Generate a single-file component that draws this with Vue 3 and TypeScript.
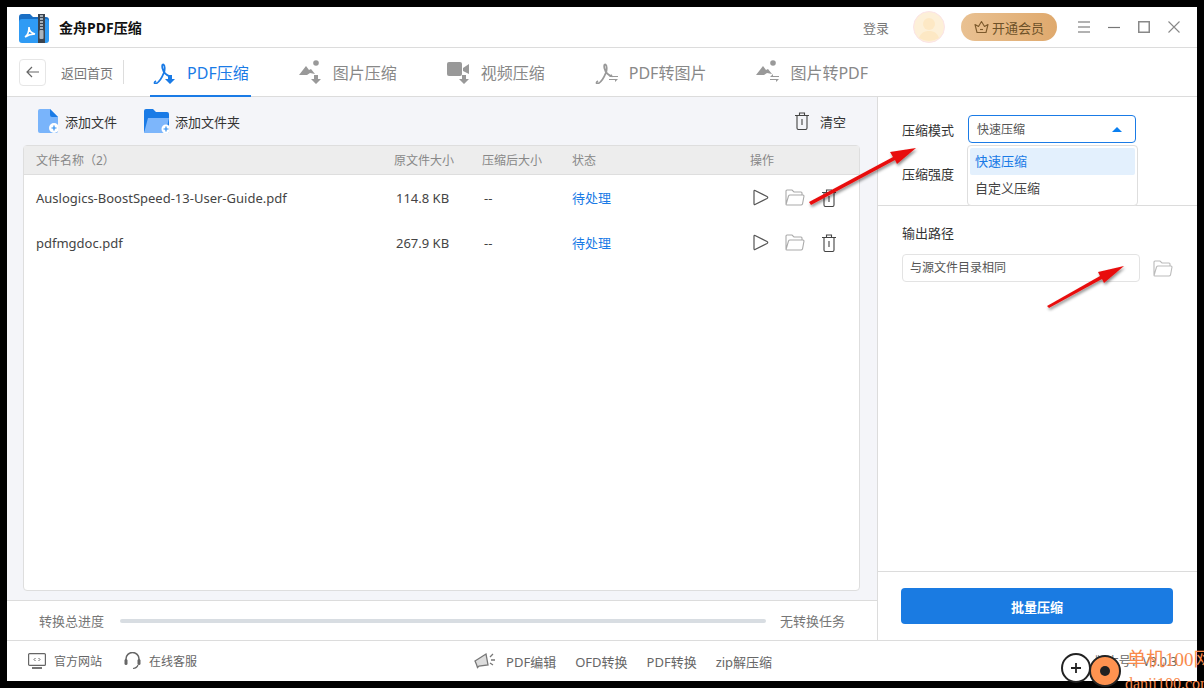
<script setup lang="ts">
interface Tab {
  label: string;
  icon: "pdfDown" | "imgDown" | "videoDown" | "pdfSwap" | "imgSwap";
  active?: boolean;
}

interface FileRow {
  name: string;
  size: string;
  after: string;
  status: string;
}

const tabs: Tab[] = [
  { label: "PDF压缩", icon: "pdfDown", active: true },
  { label: "图片压缩", icon: "imgDown" },
  { label: "视频压缩", icon: "videoDown" },
  { label: "PDF转图片", icon: "pdfSwap" },
  { label: "图片转PDF", icon: "imgSwap" },
];

const files: FileRow[] = [
  { name: "Auslogics-BoostSpeed-13-User-Guide.pdf", size: "114.8 KB", after: "--", status: "待处理" },
  { name: "pdfmgdoc.pdf", size: "267.9 KB", after: "--", status: "待处理" },
];

const promos = ["PDF编辑", "OFD转换", "PDF转换", "zip解压缩"];

const acrobat =
  "M3 21c-2 1-2 3 0 2.500 3-1 6-6 8-11 1-3 1-7-.500-8-1.500-.500-1.500 2-1 4 1 4 4 7 8 8";
</script>

<template>
  <div class="app">
    <header class="title-bar">
      <svg class="logo" width="30" height="30" viewBox="0 0 30 30">
        <path d="M0 4q0-3 3-3h8l3 3h13q3 0 3 3v3H0z" fill="#1a6fc4" />
        <rect x="0" y="6" width="30" height="24" rx="3" fill="#2f9bf4" />
        <rect x="19" y="1" width="7" height="29" fill="#3a4450" />
        <path d="M21 3h3M21 6h3M21 9h3M21 12h3M21 15h3" stroke="#c9d2da" stroke-width="1.500" />
        <rect x="20.500" y="17" width="4" height="9" rx="1" fill="#aab4bd" />
        <path d="M6 24c3-2 4-6 4-10 0 4 2 6 6 7-4 0-7 1-10 3z" fill="none" stroke="#fff" stroke-width="1.600" />
      </svg>
      <span class="app-name">金舟PDF压缩</span>
      <span class="login">登录</span>
      <span class="avatar">
        <svg width="32" height="32" viewBox="0 0 32 32">
          <circle cx="16" cy="16" r="15.500" fill="#fdf0d8" stroke="#fbe3e6" />
          <circle cx="16" cy="13" r="6" fill="#fde8c4" />
          <path d="M6 27c2-6 6-7 10-7s8 1 10 7q-10 6-20 0z" fill="#fde8c4" />
        </svg>
      </span>
      <span class="vip">
        <svg width="15" height="14" viewBox="0 0 15 14" fill="none" stroke="#7d5a2c" stroke-width="1.100">
          <path d="M3 12.500h9l2-8-3.500 2L7.500 1.500 4.500 6.500 1 4.500z" stroke-linejoin="round" />
          <path d="M6 9.500h3" />
        </svg>
        开通会员
      </span>
      <div class="win-btns">
        <svg width="12" height="12" viewBox="0 0 12 12" stroke="#999" stroke-width="1.300">
          <path d="M0 1h12M0 6h12M0 11h12" />
        </svg>
        <svg width="12" height="12" viewBox="0 0 12 12" stroke="#777" stroke-width="1.200">
          <path d="M0 6.500h12" />
        </svg>
        <svg width="12" height="12" viewBox="0 0 12 12" fill="none" stroke="#888" stroke-width="1.500">
          <rect x=".750" y=".750" width="10.500" height="10.500" />
        </svg>
        <svg width="12" height="12" viewBox="0 0 12 12" stroke="#888" stroke-width="1.100">
          <path d="M.500.500l11 11M11.500.500l-11 11" />
        </svg>
      </div>
    </header>

    <nav class="tab-bar">
      <button class="back" type="button">
        <svg width="14" height="12" viewBox="0 0 14 12" fill="none" stroke="#666" stroke-width="1.200">
          <path d="M13 6H1M6 1L1 6l5 5" />
        </svg>
      </button>
      <span class="back-text">返回首页</span>
      <span class="divider"></span>
      <div class="tabs">
        <div v-for="tab in tabs" :key="tab.label" class="tab" :class="{ 'tab--active': tab.active }">
          <svg class="tab-icon" width="24" height="24" viewBox="0 0 24 24">
            <template v-if="tab.icon === 'pdfDown' || tab.icon === 'pdfSwap'">
              <path :d="acrobat" fill="none" stroke="currentColor" stroke-width="1.800" />
            </template>
            <template v-if="tab.icon === 'imgDown' || tab.icon === 'imgSwap'">
              <path d="M0 15l7-9 3 4 2-1 4 5-5-1-3 2z" fill="currentColor" />
              <circle cx="17" cy="3" r="2.800" fill="currentColor" />
            </template>
            <template v-if="tab.icon === 'videoDown'">
              <rect x="0" y="2" width="15" height="14" rx="2" fill="currentColor" />
              <path d="M16 8l6-4v10l-6-3z" fill="currentColor" />
            </template>
            <path
              v-if="tab.icon === 'pdfDown' || tab.icon === 'imgDown' || tab.icon === 'videoDown'"
              d="M15 15h4v4h3l-5 5-5-5h3z"
              fill="currentColor"
            />
            <path
              v-if="tab.icon === 'pdfSwap' || tab.icon === 'imgSwap'"
              d="M14 17l3-3v2h6v1zM14 19h9l-3 3v-2h-6z"
              fill="currentColor"
            />
          </svg>
          <span>{{ tab.label }}</span>
        </div>
      </div>
    </nav>

    <div class="main">
      <section class="left">
        <div class="toolbar">
          <span class="tool tool--file">
            <svg width="20" height="24" viewBox="0 0 20 24">
              <path d="M2 0h10l8 8v14q0 2-2 2H2q-2 0-2-2V2q0-2 2-2z" fill="#79b4fb" />
              <path d="M12 0l8 8h-6q-2 0-2-2z" fill="#1a7be6" />
              <circle cx="16" cy="19" r="5" fill="#fff" />
              <path d="M13.500 19h5M16 16.500v5" stroke="#2f8ef0" stroke-width="1.200" />
            </svg>
            添加文件
          </span>
          <span class="tool tool--folder">
            <svg width="25" height="24" viewBox="0 0 25 24">
              <path d="M0 2q0-2 2-2h7l3 3h11q2 0 2 2v2H0z" fill="#1a7be6" />
              <path d="M0 22V7h25v15q0 2-2 2H2q-2 0-2-2z" fill="#1a7be6" />
              <path d="M4 9h21l-3 13q0 2-2 2H0z" fill="#7db6fb" />
              <circle cx="22" cy="20" r="4.500" fill="#fff" />
              <path d="M19.500 20h5M22 17.500v5" stroke="#2f8ef0" stroke-width="1.200" />
            </svg>
            添加文件夹
          </span>
          <span class="tool tool--clear">
            <svg width="14" height="18" viewBox="0 0 14 18" fill="none" stroke="#444" stroke-width="1.100">
              <path d="M0 3.500h14M4.500 3.500V1h5v2.500M2 3.500v12.500q0 1.500 1.500 1.500h7q1.500 0 1.500-1.500V3.500M7 7v6" />
            </svg>
            清空
          </span>
        </div>

        <div class="table">
          <div class="row row--head">
            <span>文件名称（2）</span>
            <span>原文件大小</span>
            <span>压缩后大小</span>
            <span>状态</span>
            <span>操作</span>
          </div>
          <div v-for="file in files" :key="file.name" class="row row--file">
            <span class="file-name">{{ file.name }}</span>
            <span class="cell-num">{{ file.size }}</span>
            <span class="cell-num">{{ file.after }}</span>
            <span class="status">{{ file.status }}</span>
            <span class="actions">
              <svg width="16" height="17" viewBox="0 0 16 17" fill="none" stroke="#555" stroke-width="1.200">
                <path d="M2 1.500q-1-.500-1 1v12q0 1.500 1 1l12-6q1.500-1 0-2z" stroke-linejoin="round" />
              </svg>
              <svg width="20" height="17" viewBox="0 0 20 17" fill="none" stroke="#aaa" stroke-width="1.100">
                <path d="M1 15V2q0-1 1-1h5l2 2h7q1 0 1 1v2M1 15.500q0 .500 1 .500h14q1 0 1.500-1L19 7q0-1-1-1H5q-1 0-1.500 1z" />
              </svg>
              <svg width="16" height="18" viewBox="0 0 16 18" fill="none" stroke="#444" stroke-width="1.100">
                <path d="M1 3.500h14M5.500 3.500V1h5v2.500M3 3.500v12.500q0 1.500 1.500 1.500h7q1.500 0 1.500-1.500V3.500M8 7v6" />
              </svg>
            </span>
          </div>
        </div>

        <div class="progress">
          <span>转换总进度</span>
          <div class="track"></div>
          <span>无转换任务</span>
        </div>
      </section>

      <aside class="right">
        <div class="settings">
          <div class="field">
            <label>压缩模式</label>
            <div class="select">
              <span>快速压缩</span>
              <i class="caret"></i>
            </div>
          </div>
          <div class="field field--strength">
            <label>压缩强度</label>
          </div>
          <ul class="dropdown">
            <li class="dropdown-item dropdown-item--active">快速压缩</li>
            <li class="dropdown-item">自定义压缩</li>
          </ul>
        </div>

        <div class="output">
          <div class="output-label">输出路径</div>
          <div class="output-row">
            <div class="path-input">与源文件目录相同</div>
            <svg width="20" height="17" viewBox="0 0 20 17" fill="none" stroke="#bbb" stroke-width="1.100">
              <path d="M1 15V2q0-1 1-1h5l2 2h7q1 0 1 1v2M1 15.500q0 .500 1 .500h14q1 0 1.500-1L19 7q0-1-1-1H5q-1 0-1.500 1z" />
            </svg>
          </div>
        </div>

        <div class="submit-box">
          <button class="submit" type="button">批量压缩</button>
        </div>
      </aside>
    </div>

    <footer class="footer">
      <span class="foot-link foot-link--site">
        <svg width="18" height="16" viewBox="0 0 18 16" fill="none" stroke="#666" stroke-width="1.200">
          <rect x=".600" y=".600" width="16.800" height="11.800" rx="1" />
          <path d="M4 15h10" stroke-width="1.800" />
          <path d="M7.500 5L6 6.500 7.500 8M10.500 5L12 6.500 10.500 8" stroke-width="1" />
        </svg>
        官方网站
      </span>
      <span class="foot-link foot-link--service">
        <svg width="17" height="18" viewBox="0 0 17 18" fill="none" stroke="#666" stroke-width="1.500">
          <path d="M2 9V7a6.500 6.500 0 0 1 13 0v2" />
          <rect x=".500" y="7" width="3" height="6" rx="1.500" fill="#666" stroke="none" />
          <rect x="13.500" y="7" width="3" height="6" rx="1.500" fill="#666" stroke="none" />
          <path d="M14 13q-1 3-5 3.500" stroke-width="1.200" />
        </svg>
        在线客服
      </span>
      <svg class="horn" width="22" height="18" viewBox="0 0 22 18" fill="none" stroke="#777" stroke-width="1.300">
        <path d="M1 9l11-7 2 11-9 1-1.500 1.500-1-3z" fill="#ddd" />
        <path d="M16 5l3-3M17 8h4M16 11l3 2" />
      </svg>
      <div class="promos">
        <span v-for="promo in promos" :key="promo">{{ promo }}</span>
      </div>
      <span class="version">版本号：V3.0.3</span>
    </footer>

    <svg class="arrows" width="1190" height="674" viewBox="7 7 1190 674">
      <defs>
        <filter id="arrowShadow" x="-20%" y="-20%" width="140%" height="150%">
          <feDropShadow dx="1" dy="2" stdDeviation="1.500" flood-color="#000" flood-opacity="0.45" />
        </filter>
      </defs>
      <g fill="#e8100f" filter="url(#arrowShadow)">
        <path d="M809 202L893 157 890 152 916 148 897 164 895 160 811 205z" />
        <path d="M1047 306L1100 276 1098 272 1124 266 1104 283 1102 279 1049 308z" />
      </g>
    </svg>

    <div class="watermark">
      <svg width="100" height="48" viewBox="0 0 100 48">
        <path d="M22 2A22 22 0 0 0 24 47 20 20 0 0 1 22 2z" fill="#f26a0a" />
        <circle cx="23" cy="22" r="14" fill="#fff" stroke="#222" stroke-width="2" />
        <path d="M18 22h10M23 17v10" stroke="#222" stroke-width="1.800" />
        <circle cx="52" cy="25" r="15" fill="#ff9350" stroke="#222" stroke-width="2" />
        <circle cx="52" cy="25" r="5" fill="#222" />
      </svg>
      <span class="wm-cn">单机100网</span>
      <span class="wm-en">danji100.com</span>
    </div>
  </div>
</template>

<style scoped>
.app {
  position: relative;
  width: 1190px;
  height: 674px;
  margin: 7px 0 0 7px;
  display: flex;
  flex-direction: column;
  background: #fff;
  font-family: "Noto Sans", "Noto Sans CJK SC", sans-serif;
  font-size: 13px;
  color: #333;
}

.title-bar {
  height: 41px;
  flex: none;
  display: flex;
  align-items: center;
  padding-left: 12px;
  border-bottom: 1px solid #dcdcdc;
  box-sizing: border-box;
}

.logo {
  margin-top: 2px;
}

.app-name {
  margin-left: 10px;
  font-size: 14px;
  font-weight: 700;
  color: #111;
}

.login {
  margin-left: auto;
  color: #777;
}

.avatar {
  display: flex;
  margin-left: 24px;
}

.vip {
  display: flex;
  align-items: center;
  justify-content: center;
  gap: 3px;
  width: 96px;
  height: 28px;
  margin-left: 16px;
  border-radius: 14px;
  background: linear-gradient(90deg, #e9c192, #dfa96d);
  color: #6d5128;
}

.win-btns {
  display: flex;
  gap: 18px;
  margin: 0 17px 0 21px;
}

.tab-bar {
  height: 49px;
  flex: none;
  display: flex;
  align-items: center;
  padding-left: 12px;
  border-bottom: 1px solid #dcdcdc;
  box-sizing: border-box;
}

.back {
  width: 27px;
  height: 27px;
  display: flex;
  align-items: center;
  justify-content: center;
  padding: 0;
  background: #fff;
  border: 1px solid #e6e6e6;
  border-radius: 4px;
}

.back-text {
  margin-left: 15px;
  color: #777;
}

.divider {
  width: 1px;
  height: 24px;
  margin-left: 10px;
  background: #ddd;
}

.tabs {
  display: flex;
  gap: 45px;
  height: 100%;
  margin-left: 26px;
}

.tab {
  display: flex;
  align-items: center;
  gap: 10px;
  padding: 0 2px 0 3px;
  margin-bottom: -1px;
  font-size: 16px;
  color: #888;
  box-sizing: border-box;
  border-bottom: 2px solid transparent;
}

.tab-icon {
  color: #999;
}

.tab--active {
  color: #1a7be6;
  border-bottom-color: #1a7be6;
}

.tab--active .tab-icon {
  color: #1a7be6;
}

.main {
  flex: 1;
  min-height: 0;
  display: flex;
}

.left {
  width: 870px;
  flex: none;
  display: flex;
  flex-direction: column;
  background: #f4f5f9;
  border-right: 1px solid #dcdcdc;
  box-sizing: content-box;
}

.toolbar {
  height: 48px;
  flex: none;
  display: flex;
  align-items: center;
  color: #333;
}

.tool {
  display: flex;
  align-items: center;
}

.tool--file {
  margin-left: 31px;
  gap: 7px;
}

.tool--folder {
  margin-left: 27px;
  gap: 6px;
}

.tool--clear {
  margin-left: auto;
  margin-right: 31px;
  gap: 11px;
}

.table {
  flex: 1;
  min-height: 0;
  margin: 0 17px 9px 16px;
  background: #fff;
  border: 1px solid #dedede;
  border-radius: 4px;
}

.row {
  display: grid;
  grid-template-columns: 358px 88px 90px 178px 1fr;
  align-items: center;
  padding-left: 12px;
}

.row--head {
  height: 28px;
  background: #ededed;
  border-bottom: 1px solid #dedede;
  font-size: 12px;
  color: #888;
}

.row--file {
  height: 45px;
  color: #444;
}

.cell-num {
  padding-left: 2px;
}

.status {
  color: #1a7be6;
}

.actions {
  display: flex;
  align-items: center;
  gap: 16px;
  padding-left: 3px;
}

.progress {
  height: 40px;
  flex: none;
  display: flex;
  align-items: center;
  padding: 0 32px;
  background: #fff;
  border-top: 1px solid #dcdcdc;
  box-sizing: border-box;
  color: #777;
}

.track {
  flex: 1;
  height: 4px;
  margin: 0 14px 0 16px;
  border-radius: 2px;
  background: #d8dde2;
}

.right {
  flex: 1;
  min-width: 0;
  display: flex;
  flex-direction: column;
}

.settings {
  position: relative;
  height: 109px;
  flex: none;
  box-sizing: border-box;
  padding: 18px 0 0 24px;
  border-bottom: 1px solid #dcdcdc;
}

.field {
  display: flex;
  align-items: center;
  gap: 14px;
  height: 28px;
}

.field--strength {
  margin-top: 16px;
}

.select {
  width: 168px;
  height: 28px;
  display: flex;
  align-items: center;
  justify-content: space-between;
  padding: 0 13px 0 8px;
  box-sizing: border-box;
  border: 1px solid #1a7be6;
  border-radius: 4px;
  font-size: 12px;
  color: #555;
}

.caret {
  width: 0;
  height: 0;
  border: 5.5px solid transparent;
  border-top-width: 0;
  border-bottom: 5.5px solid #0a7ff0;
}

.dropdown {
  position: absolute;
  top: 48px;
  left: 89px;
  width: 171px;
  height: 61px;
  margin: 0;
  padding: 2px;
  box-sizing: border-box;
  list-style: none;
  background: #fff;
  border: 1px solid #dedede;
  border-radius: 4px;
}

.dropdown-item {
  height: 27px;
  line-height: 27px;
  padding-left: 5px;
  color: #444;
}

.dropdown-item--active {
  background: #e3f0fd;
  color: #1a7be6;
  border-radius: 2px;
}

.output {
  flex: 1;
  padding: 17px 24px 0;
}

.output-label {
  height: 20px;
  line-height: 20px;
}

.output-row {
  display: flex;
  align-items: center;
  gap: 13px;
  margin-top: 11px;
}

.path-input {
  width: 238px;
  height: 28px;
  line-height: 26px;
  padding-left: 7px;
  box-sizing: border-box;
  border: 1px solid #e3e3e3;
  border-radius: 4px;
  font-size: 12px;
  color: #555;
}

.submit-box {
  height: 69px;
  flex: none;
  padding: 16px 23px 0 23px;
  box-sizing: border-box;
  border-top: 1px solid #dcdcdc;
}

.submit {
  width: 272px;
  height: 36px;
  background: #1a7be2;
  border: 0;
  border-radius: 4px;
  color: #fff;
  font: inherit;
  font-weight: 700;
}

.footer {
  position: relative;
  height: 41px;
  flex: none;
  display: flex;
  align-items: center;
  padding-left: 21px;
  border-top: 1px solid #dcdcdc;
  box-sizing: border-box;
  color: #666;
}

.foot-link {
  display: flex;
  align-items: center;
  font-size: 12px;
}

.foot-link--site {
  gap: 8px;
}

.foot-link--service {
  gap: 8px;
  margin-left: 22px;
}

.horn {
  margin-left: 277px;
}

.promos {
  display: flex;
  gap: 19px;
  margin-left: 10px;
}

.version {
  margin-left: auto;
  margin-right: 20px;
  font-size: 12px;
}

.arrows {
  position: absolute;
  top: 0;
  left: 0;
  pointer-events: none;
}

.watermark {
  position: absolute;
  left: 1046px;
  top: 637px;
  width: 158px;
  height: 51px;
}

.watermark svg {
  position: absolute;
  left: 0;
  top: 2px;
}

.wm-cn {
  position: absolute;
  left: 74px;
  top: 5px;
  font-family: "Liberation Serif", "Noto Sans CJK SC", serif;
  font-size: 19px;
  line-height: 22px;
  color: #f98a4b;
  white-space: nowrap;
}

.wm-en {
  position: absolute;
  left: 72px;
  top: 31px;
  font-family: "Liberation Serif", serif;
  font-size: 16px;
  line-height: 18px;
  color: #f98a4b;
  white-space: nowrap;
}
</style>

<style>
html,
body {
  margin: 0;
  height: 688px;
  overflow: hidden;
  background: #000;
}
</style>
